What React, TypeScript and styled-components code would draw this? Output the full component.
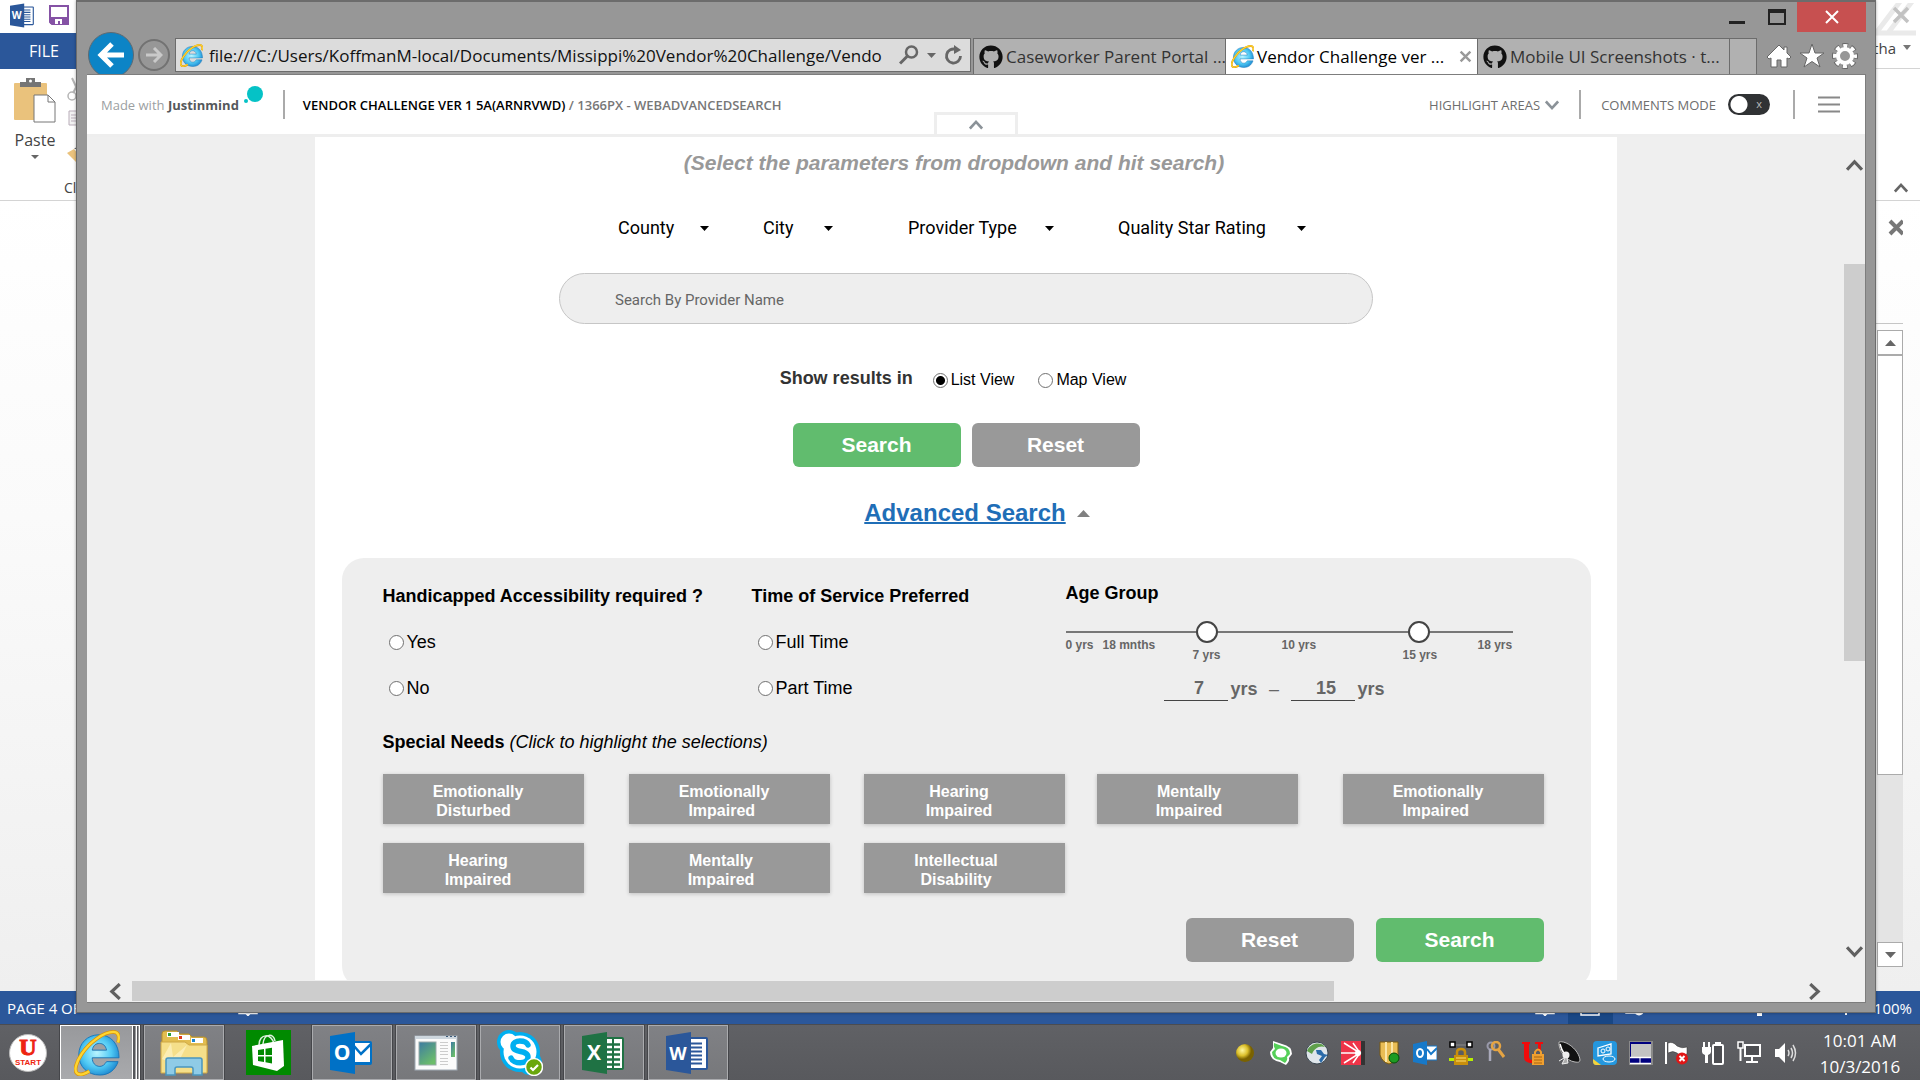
import React from "react";
import styled, { createGlobalStyle, css } from "styled-components";
import { FaGithub } from "react-icons/fa";

const ui = `"Open Sans", "Noto Sans", sans-serif`;
const arial = `"Liberation Sans", Arial, sans-serif`;
const roboto = `Roboto, "Liberation Sans", sans-serif`;

const GlobalStyle = createGlobalStyle`
  * { box-sizing: border-box; }
  body { margin: 0; overflow: hidden; font-family: ${ui}; }
  button, input, select { font: inherit; margin: 0; padding: 0; border: 0; background: none; color: inherit; }
  button { cursor: pointer; }
  fieldset { margin: 0; padding: 0; border: 0; min-width: 0; }
  legend { padding: 0; }
  h1, h2, h3, p { margin: 0; }
  svg { display: block; flex: none; }
`;

/* ---------- desktop and the word processor behind ---------- */

const Desktop = styled.div`
  position: relative;
  display: grid;
  grid-template-rows: 1fr 56px;
  height: 100vh;
  overflow: hidden;
`;
const Stage = styled.div`
  position: relative;
  min-height: 0;
`;
const WordWindow = styled.div`
  display: flex;
  flex-direction: column;
  height: 100%;
  background: #fff;
  color: #444;
`;
const WordTitle = styled.div`
  display: flex;
  justify-content: space-between;
  height: 33px;
  padding: 3px 0 0 10px;
`;
const WordQuick = styled.div`
  display: flex;
  align-items: flex-start;
  gap: 14px;
`;
const WordTabs = styled.div`
  display: flex;
  justify-content: space-between;
  height: 36px;
  border-bottom: 1px solid #d4d4d4;
`;
const FileTab = styled.button`
  width: 92px;
  padding-right: 4px;
  background: #2b579a;
  color: #fff;
  font-size: 16px;
  height: 36px;
`;
const UserName = styled.div`
  display: flex;
  align-items: center;
  gap: 7px;
  padding: 0 9px 6px 0;
  font-size: 15px;
`;
const Ribbon = styled.div`
  display: flex;
  justify-content: space-between;
  height: 132px;
  border-bottom: 1px solid #d4d4d4;
`;
const PasteGroup = styled.div`
  display: flex;
  gap: 8px;
  padding: 8px 0 0 14px;
`;
const PasteButton = styled.button`
  display: flex;
  flex-direction: column;
  align-items: center;
  width: 42px;
  font-size: 16px;
  line-height: 24px;
  height: 94px;
  gap: 3px;
`;
const ClipColumn = styled.div`
  display: flex;
  flex-direction: column;
  justify-content: space-between;
  padding-bottom: 2px;
  font-size: 14px;
  line-height: 20px;
`;
const RibbonEnd = styled.div`
  display: flex;
  align-items: flex-end;
  padding: 0 12px 5px 0;
`;
const WordBody = styled.div`
  flex: 1;
  min-height: 0;
  display: flex;
  flex-direction: column;
  align-items: flex-end;
  padding: 16px 17px 24px 0;
  background: linear-gradient(#ffffff, #fafafa 40%, #efefef);
`;
const PaneHead = styled.div`
  height: 107px;
  width: 100px;
  display: flex;
  justify-content: flex-end;
  border-bottom: 1px solid #c6c6c6;
`;
const WordScroll = styled.div`
  flex: 1;
  width: 26px;
  margin-top: 6px;
  display: flex;
  flex-direction: column;
  background: #e4e4e4;
`;
const ScrollBox = styled.button`
  width: 26px;
  height: 25px;
  display: grid;
  place-items: center;
  background: #fff;
  border: 1px solid #ababab;
`;
const WordThumb = styled.div`
  flex: 0 0 66%;
  background: #fff;
  border: 1px solid #ababab;
`;
const ScrollGap = styled.div`
  flex: 1;
`;
const StatusBar = styled.div`
  display: flex;
  justify-content: space-between;
  align-items: center;
  height: 33px;
  padding: 0 8px 0 7px;
  background: #2b579a;
  color: #fff;
  font-size: 15px;
  line-height: 18px;
`;
const StatusGroup = styled.div<{ $gap: number }>`
  display: flex;
  align-items: center;
  gap: ${(p) => p.$gap}px;
  height: 33px;
`;
const ViewModes = styled.div`
  display: flex;
  align-items: center;
  height: 33px;
`;
const ViewMode = styled.button<{ $on?: boolean }>`
  display: grid;
  place-items: center;
  width: 45px;
  height: 33px;
  background: ${(p) => (p.$on ? "#194785" : "transparent")};
`;

/* ---------- browser window ---------- */

const Browser = styled.div`
  position: absolute;
  inset: 0 44px 11px 76px;
  display: flex;
  flex-direction: column;
  padding: 0 9px 9px 10px;
  background: #979797;
  border: 1px solid #6c6c6c;
  border-top-width: 2px;
  box-shadow: 0 0 3px rgba(0, 0, 0, 0.35);
`;
const TitleBar = styled.div`
  display: flex;
  justify-content: flex-end;
  align-items: flex-start;
  height: 36px;
`;
const CaptionButton = styled.button<{ $close?: boolean }>`
  display: grid;
  place-items: center;
  width: ${(p) => (p.$close ? 69 : 40)}px;
  height: 30px;
  background: ${(p) => (p.$close ? "#c75050" : "transparent")};
`;
const Nav = styled.div`
  display: flex;
  align-items: flex-start;
  height: 36px;
  padding-left: 1px;
`;
const BackButton = styled.button`
  flex: none;
  display: grid;
  place-items: center;
  width: 46px;
  height: 46px;
  margin-top: -6px;
  border-radius: 50%;
  background: #0c84c6;
  border: 1px solid #5e6a72;
`;
const ForwardButton = styled.button`
  flex: none;
  display: grid;
  place-items: center;
  width: 32px;
  height: 32px;
  margin: 1px 5px 0 4px;
  border-radius: 50%;
  border: 2px solid #727272;
`;
const AddressBar = styled.div`
  flex: 1;
  min-width: 0;
  display: flex;
  align-items: center;
  height: 34px;
  padding: 0 6px 0 4px;
  margin-right: 2px;
  background: #dcdcdc;
  border: 1px solid #6c6c6c;
  color: #111;
`;
const Url = styled.input`
  flex: 1;
  min-width: 0;
  margin: 0 6px;
  font-size: 17px;
  outline: 0;
`;
const AddressTool = styled.button`
  display: grid;
  place-items: center;
  margin-left: 8px;
`;
const Tab = styled.button<{ $active?: boolean }>`
  flex: none;
  display: flex;
  align-items: center;
  gap: 3px;
  width: 252px;
  height: 37px;
  padding: 0 5px;
  background: ${(p) => (p.$active ? "#fff" : "#b1b1b1")};
  border: 1px solid #6c6c6c;
  border-right-width: 0;
  border-bottom-color: ${(p) => (p.$active ? "#fff" : "#808080")};
  color: ${(p) => (p.$active ? "#000" : "#333")};
  font-size: 17px;
  white-space: nowrap;
`;
const TabTitle = styled.span`
  flex: 1;
  text-align: left;
`;
const NewTab = styled.button`
  flex: none;
  width: 28px;
  height: 37px;
  background: #b1b1b1;
  border: 1px solid #6c6c6c;
`;
const Tools = styled.div`
  flex: none;
  display: flex;
  gap: 7px;
  padding: 5px 8px 0 9px;
`;
const PlainButton = styled.button`
  display: grid;
  place-items: center;
`;
const Viewport = styled.div`
  position: relative;
  flex: 1;
  min-height: 0;
  display: flex;
  flex-direction: column;
  background: #efefef;
  border: 1px solid #7d7d7d;
  border-left: 0;
`;

/* ---------- prototype viewer toolbar ---------- */

const ViewerBar = styled.header`
  position: relative;
  flex: none;
  display: flex;
  align-items: center;
  justify-content: space-between;
  height: 62px;
  padding: 0 25px 0 14px;
  background: #fff;
  border-bottom: 3px solid #eee;
  font-size: 13px;
  color: #6e6e6e;
`;
const BarGroup = styled.div`
  display: flex;
  align-items: center;
`;
const Brand = styled.div`
  display: flex;
  align-items: center;
  gap: 2px;
  font-size: 13px;
  color: #9c9fa2;
  b { color: #55585b; }
`;
const Divider = styled.span<{ $gap: number }>`
  width: 2px;
  height: 29px;
  margin: 0 ${(p) => p.$gap}px;
  background: #aaa;
`;
const Crumb = styled.h1`
  font-size: 13px;
  font-weight: 600;
  color: #777;
  b { font-weight: 600; color: #000; }
`;
const Handle = styled.button`
  position: absolute;
  left: 50%;
  bottom: -3px;
  width: 84px;
  height: 25px;
  margin-left: -42px;
  display: grid;
  place-items: center;
  background: #fff;
  border: 3px solid #eee;
`;
const BarButton = styled.button`
  display: flex;
  align-items: center;
  gap: 5px;
`;
const ToggleLabel = styled.label`
  display: flex;
  align-items: center;
  gap: 12px;
`;
const Toggle = styled.input`
  appearance: none;
  width: 42px;
  height: 21px;
  border-radius: 11px;
  background: radial-gradient(circle at 11px 50%, #fff 8px, transparent 9px), #303234;
`;
const ToggleFrame = styled.span`
  position: relative;
  display: grid;
`;
const ToggleMark = styled.span`
  position: absolute;
  right: 8px;
  top: 3px;
  font-size: 11px;
  line-height: 14px;
  color: #bbb;
`;

/* ---------- page ---------- */

const PageRow = styled.div`
  flex: 1;
  min-height: 0;
  display: flex;
`;
const Canvas = styled.div`
  flex: 1;
  min-width: 0;
  display: flex;
  justify-content: center;
  overflow: hidden;
`;
const Page = styled.main`
  width: 100%;
  max-width: 1302px;
  display: flex;
  flex-direction: column;
  align-items: center;
  padding: 13px 26px 0 27px;
  background: #fff;
  font-family: ${arial};
  color: #000;
  > * { flex: none; }
`;
const Hint = styled.h2`
  padding-right: 24px;
  font-size: 21px;
  line-height: 26px;
  font-style: italic;
  color: #999;
`;
const Filters = styled.div`
  display: grid;
  grid-template-columns: 145px 145px 210px 188px;
  margin-top: 40px;
  padding-right: 8px;
  font-family: ${roboto};
  font-size: 18px;
`;
const SelectBox = styled.label<{ $width: number }>`
  position: relative;
  display: block;
  width: ${(p) => p.$width}px;
  height: 24px;
  select {
    appearance: none;
    display: block;
    width: 100%;
    height: 24px;
    line-height: 24px;
    outline: 0;
  }
  svg { position: absolute; right: 0; top: 10px; }
`;
const NameSearch = styled.input`
  width: 814px;
  max-width: 100%;
  height: 51px;
  margin-top: 33px;
  padding: 2px 55px 0;
  border: 1px solid #c6c6c6;
  border-radius: 26px;
  background: #eee;
  font-family: ${roboto};
  font-size: 15px;
  &::placeholder { color: #666; opacity: 1; }
`;
const ResultsRow = styled.fieldset`
  display: flex;
  margin-top: 42px;
  padding-right: 26px;
  line-height: 24px;
`;
const ResultsTitle = styled.span`
  margin-right: 20px;
  font-size: 18px;
  font-weight: bold;
  color: #333;
`;
const RadioPair = styled.div`
  display: flex;
  gap: 24px;
`;
const RadioLabel = styled.label<{ $small?: boolean }>`
  display: flex;
  align-items: center;
  gap: 3px;
  height: ${(p) => (p.$small ? 26 : 22)}px;
  padding-top: ${(p) => (p.$small ? 2 : 0)}px;
  font-size: ${(p) => (p.$small ? 16 : 18)}px;
`;
const Radio = styled.input`
  appearance: none;
  width: 15px;
  height: 15px;
  border: 1px solid #707070;
  border-radius: 50%;
  background: #fff;
  &:checked { background: radial-gradient(circle, #000 4px, #fff 5px); }
`;
const Buttons = styled.div`
  display: flex;
  gap: 11px;
  margin-top: 31px;
`;
const ActionButton = styled.button<{ $tone: "go" | "plain" }>`
  width: 168px;
  height: 44px;
  border-radius: 6px;
  background: ${(p) => (p.$tone === "go" ? "#61bc6e" : "#999")};
  color: #fff;
  font-size: 21px;
  font-weight: bold;
`;
const AdvancedRow = styled.div`
  display: flex;
  align-items: center;
  gap: 11px;
  margin-top: 32px;
  padding-left: 22px;
  line-height: 28px;
  a {
    font-size: 24px;
    font-weight: bold;
    color: #1f6eb7;
    text-decoration-thickness: 2px;
  }
`;
const Panel = styled.section`
  align-self: stretch;
  margin-top: 31px;
  padding: 24px 47px 26px 41px;
  border-radius: 22px;
  background: #eee;
  font-size: 18px;
`;
const Columns = styled.div`
  display: grid;
  grid-template-columns: 369px 314px 1fr;
`;
const RadioColumn = styled.fieldset`
  display: flex;
  flex-direction: column;
  padding-top: 3px;
`;
const Title = styled.h3`
  font-size: 18px;
  line-height: 22px;
  font-weight: bold;
`;
const RadioStack = styled.div`
  display: flex;
  flex-direction: column;
  gap: 24px;
  padding: 24px 0 0 6px;
`;
const AgeColumn = styled.div`
  max-width: 447px;
  color: #666;
  h3 { color: #000; }
`;
const Slider = styled.div`
  position: relative;
  height: 22px;
  margin-top: 17px;
  background: linear-gradient(#777, #777) 0 10px / 100% 2px no-repeat;
  input {
    position: absolute;
    inset: 0;
    width: 100%;
    height: 22px;
    appearance: none;
    pointer-events: none;
  }
  input::-webkit-slider-thumb {
    appearance: none;
    width: 22px;
    height: 22px;
    border-radius: 50%;
    border: 2px solid #444;
    background: #fff;
    pointer-events: auto;
  }
`;
const Scale = styled.div`
  display: grid;
  grid-template-columns: 37px 90px 89px 121px 75px auto;
  margin-top: -6px;
  height: 28px;
  font-size: 12px;
  line-height: 14px;
  font-weight: bold;
`;
const Tick = styled.span<{ $low?: boolean }>`
  padding-top: ${(p) => (p.$low ? 11 : 1)}px;
`;
const AgeFields = styled.div`
  display: flex;
  align-items: center;
  margin: 12px 0 0 98px;
  font-weight: bold;
  label { display: flex; align-items: center; gap: 3px; }
  input {
    width: 64px;
    height: 24px;
    padding-left: 7px;
    text-align: center;
    border-bottom: 1px solid #444;
  }
`;
const Dash = styled.span`
  width: 33px;
  text-align: center;
  font-weight: normal;
`;
const NeedsTitle = styled(Title)`
  margin-top: 30px;
  i { font-weight: normal; }
`;
const Needs = styled.div`
  display: grid;
  grid-template-columns: 246px 235px 233px 246px 201px;
  row-gap: 19px;
  margin-top: 21px;
`;
const NeedButton = styled.button<{ $inset: number }>`
  width: 201px;
  height: 50px;
  padding: 4px ${(p) => p.$inset}px 0 0;
  background: #999;
  box-shadow: 0 1px 4px rgba(0, 0, 0, 0.2);
  color: #fff;
  font-size: 16px;
  line-height: 19px;
  font-weight: bold;
  white-space: pre-line;
`;
const PanelButtons = styled.div`
  display: flex;
  justify-content: flex-end;
  gap: 22px;
  margin-top: 25px;
`;
const VScroll = styled.div`
  flex: none;
  width: 21px;
  display: flex;
  flex-direction: column;
  align-items: center;
  padding: 20px 0;
`;
const VThumb = styled.div`
  width: 100%;
  flex: 0 0 397px;
  margin: 90px 0 auto;
  background: #cdcdcd;
`;
const HScroll = styled.div`
  flex: none;
  display: flex;
  align-items: center;
  height: 22px;
  padding: 0 42px 0 20px;
`;
const HThumb = styled.div`
  flex: 0 0 1202px;
  height: 20px;
  margin: 0 auto 0 8px;
  background: #cdcdcd;
`;

/* ---------- taskbar ---------- */

const Taskbar = styled.footer`
  display: flex;
  justify-content: space-between;
  align-items: stretch;
  background: linear-gradient(#606165, #58595d);
  border-top: 1px solid #4b4c50;
  padding-right: 18px;
`;
const Tasks = styled.div`
  display: flex;
  gap: 4px;
`;
const StartButton = styled.button`
  width: 56px;
  display: grid;
  place-items: center;
`;
const TaskButton = styled.button<{ $kind?: "open" | "active" | "pinned" }>`
  display: grid;
  place-items: center;
  width: 80px;
  border: 1px solid transparent;
  ${(p) =>
    (p.$kind ?? "open") === "open" &&
    css`
      background: linear-gradient(#808185, #77787b);
      border-color: #aaabae;
      outline: 1px solid #45464a;
      outline-offset: 0;
    `}
  ${(p) =>
    p.$kind === "active" &&
    css`
      padding-right: 7px;
      background:
        linear-gradient(#fff, #fff) 71px 0 / 1px 100% no-repeat,
        linear-gradient(#55565a, #55565a) 72px 0 / 2px 100% no-repeat,
        linear-gradient(#fff, #fff) 75px 0 / 1px 100% no-repeat,
        linear-gradient(#55565a, #55565a) 76px 0 / 1px 100% no-repeat,
        linear-gradient(#98999c, #a9aaad);
      border-color: #fff;
      outline: 1px solid #45464a;
    `}
`;
const Tray = styled.div`
  display: flex;
  align-items: center;
  gap: 12px;
`;
const Clock = styled.time`
  width: 84px;
  margin-left: 9px;
  padding-top: 2px;
  text-align: center;
  color: #fff;
  font-size: 17px;
  line-height: 26px;
  white-space: nowrap;
`;

/* ---------- drawings ---------- */

const Caret = ({ w = 9, h = 5, color = "#000", up = false }: { w?: number; h?: number; color?: string; up?: boolean }) => (
  <svg width={w} height={h} viewBox="0 0 10 6" preserveAspectRatio="none">
    <path d={up ? "M0 6L5 0L10 6Z" : "M0 0L10 0L5 6Z"} fill={color} />
  </svg>
);

const Chevron = ({ dir, size = 16, width = 3, color = "#606060" }: { dir: "up" | "down" | "left" | "right"; size?: number; width?: number; color?: string }) => {
  const d = { up: "M1 12L8 4.500L15 12", down: "M1 4L8 11.500L15 4", left: "M12 1L4.500 8L12 15", right: "M4 1L11.500 8L4 15" }[dir];
  return (
    <svg width={size} height={size} viewBox="0 0 16 16">
      <path d={d} fill="none" stroke={color} strokeWidth={width} />
    </svg>
  );
};

const Cross = ({ size, width, color }: { size: number; width: number; color: string }) => (
  <svg width={size} height={size} viewBox="0 0 16 16">
    <path d="M2 2L14 14M14 2L2 14" stroke={color} strokeWidth={width} />
  </svg>
);

const IELogo = ({ size }: { size: number }) => {
  const id = React.useId();
  return (
    <svg width={size} height={size} viewBox="0 0 48 48">
      <defs>
        <radialGradient id={id} cx="45%" cy="45%" r="60%">
          <stop offset="0" stopColor="#b8f4ff" />
          <stop offset="0.6" stopColor="#4fc9f4" />
          <stop offset="1" stopColor="#1c86cf" />
        </radialGradient>
      </defs>
      <path
        fillRule="evenodd"
        d="M26 5C38 5 47 14 47 29H19C19 34 22 38 27 38C30 38 32 36 34 33H46C43 42 36 47 27 47C14 47 5 38 5 26C5 14 14 5 26 5ZM19 21H34C33 16 30 14 26.500 14C23 14 20 16 19 21Z"
        fill={`url(#${id})`}
        stroke="#1a76b8"
        strokeWidth="1"
      />
      <path d="M46 13C48 6 46 2 41 2C31 2 16 13 8 25C2 34 0 42 3 45C6 48 11 46 16 43" fill="none" stroke="#d9950c" strokeWidth="4" />
      <path d="M46 13C48 6 46 2 41 2C31 2 16 13 8 25C2 34 0 42 3 45C6 48 11 46 16 43" fill="none" stroke="#ffd530" strokeWidth="2.500" />
    </svg>
  );
};

const OfficeIcon = ({ letter, color, size = 44 }: { letter: string; color: string; size?: number }) => (
  <svg width={size} height={size} viewBox="0 0 44 44">
    {letter === "O" ? (
      <>
        <rect x="22" y="10" width="20" height="24" rx="2" fill={color} />
        <path d="M24 12H40V31H24Z" fill="#fff" />
        <path d="M24 15L31 23L41 13" fill="none" stroke={color} strokeWidth="2.500" />
      </>
    ) : (
      <rect x="22" y="6" width="20" height="33" rx="2" fill={color} />
    )}
    {letter === "X" && (
      <>
        <path d="M24 8H40V37H24Z" fill="#fff" />
        <path d="M24 13.500H38M24 18.500H38M24 23.500H38M24 28.500H38M24 33.500H38" stroke={color} strokeWidth="2.500" />
        <path d="M31 8V37" stroke={color} strokeWidth="2" />
      </>
    )}
    {letter === "W" && (
      <>
        <path d="M24 8H40V37H24Z" fill="#fff" />
        <path d="M24 12.500H36M24 16.500H36M24 20.500H36M24 24.500H36M24 28.500H36M24 32.500H36" stroke={color} strokeWidth="1.800" />
      </>
    )}
    <path d="M0 5L25 1V43L0 39Z" fill={color} />
    <text x="12" y="29" textAnchor="middle" fontFamily="Open Sans" fontWeight="bold" fontSize={letter === "W" ? 18 : 21} fill="#fff">
      {letter}
    </text>
  </svg>
);

const SmallOutlook = () => (
  <svg width="24" height="24" viewBox="0 0 24 24">
    <path d="M13 5H24V19H13Z" fill="#fff" stroke="#1779c9" />
    <path d="M14 8L18 13L24 7" fill="none" stroke="#1779c9" strokeWidth="2" />
    <path d="M0 3L14 0V24L0 21Z" fill="#1779c9" />
    <ellipse cx="7" cy="12" rx="3" ry="4" fill="none" stroke="#fff" strokeWidth="2" />
  </svg>
);

const FolderIcon = () => (
  <svg width="50" height="48" viewBox="0 0 50 48">
    <path d="M3 5Q3 2 6 2H18L21 5H30L33 8H45Q48 8 48 12V43H3Z" fill="#e2bd50" stroke="#b8912e" />
    <path d="M8 3H20V8H8ZM19 6H31V11H19ZM32 9H44V14H32Z" fill="#fff" />
    <path d="M9 4H12V7H9Z" fill="#2a9d3a" /><path d="M20 7H23V10H20Z" fill="#e03a1c" /><path d="M33 10H36V13H33Z" fill="#1c86cf" />
    <path d="M2 13H26L30 16H48V44H2Z" fill="#f5df8a" stroke="#cfa844" />
    <path d="M3 30L12 14L14 28L28 16L18 36Z" fill="#fff6cf" opacity="0.600" />
    <path d="M7 46V31Q7 29 9 29H41Q43 29 43 31V46H34V40Q34 38 32 38H18Q16 38 16 40V46Z" fill="#8fcbe6" stroke="#4a96bf" strokeWidth="1.500" />
  </svg>
);

const StoreIcon = () => (
  <svg width="45" height="45" viewBox="0 0 45 45">
    <rect width="45" height="45" fill="#008a00" />
    <path d="M13 15C13 3 26 3 28 14M17 14C18 3 28 3 29 11" fill="none" stroke="#dff0df" strokeWidth="1.500" />
    <path d="M6 16L37 10L38 36L31 41L7 35Z" fill="#fff" />
    <path d="M12 20L18 19V25H12ZM19.500 18.800L26 17.800V25H19.500ZM12 26.500H18V32L12 31ZM19.500 26.500H26V33.500L19.500 32.300Z" fill="#008a00" />
  </svg>
);

const AppWindowIcon = () => (
  <svg width="44" height="36" viewBox="0 0 44 36">
    <defs>
      <linearGradient id="appPane" x1="0" y1="0" x2="0.600" y2="1">
        <stop offset="0" stopColor="#3d7ba3" /><stop offset="1" stopColor="#6cbd6a" />
      </linearGradient>
    </defs>
    <rect x="1" y="1" width="42" height="34" fill="#fbfbfb" stroke="#9fa9b3" />
    <rect x="1" y="1" width="42" height="3" fill="#cdd6de" />
    <path d="M32 1.500H34M36 1.500H38M40 1.500H42" stroke="#3b5a7a" />
    <rect x="5" y="7" width="17" height="23" fill="url(#appPane)" stroke="#9aa" />
    <path d="M26 7.500H34M26 10.500H34M26 13.500H34M26 16.500H34M26 19.500H34M26 23.500H34M26 26.500H34M26 29.500H34" stroke="#ccc" />
    <rect x="37" y="7" width="4" height="15" fill="url(#appPane)" />
  </svg>
);

const SkypeIcon = () => (
  <svg width="46" height="46" viewBox="0 0 46 46">
    <g fill="#00aff0"><circle cx="23" cy="22" r="20" /><circle cx="12" cy="12" r="12" /><circle cx="33" cy="33" r="12" /></g>
    <g fill="#fff"><circle cx="23" cy="22" r="16.500" /><circle cx="12" cy="12" r="8.500" /></g>
    <path d="M31 15C29 10 16 9 16 16C16 24 31 19 31 27C31 35 16 34 14 28" fill="none" stroke="#00aff0" strokeWidth="5.500" strokeLinecap="round" />
    <circle cx="37" cy="37" r="8.500" fill="#6aa70d" stroke="#fff" strokeWidth="1.500" />
    <path d="M33.500 37.500L36 40L41 35" fill="none" stroke="#fff" strokeWidth="2.200" />
  </svg>
);

const StartLogo = () => (
  <svg width="40" height="40" viewBox="0 0 40 40">
    <circle cx="20" cy="20" r="18.500" fill="#fff" stroke="#bbb" />
    <text x="20" y="22" textAnchor="middle" fontFamily="Liberation Serif" fontWeight="bold" fontSize="24" fill="#ee2410" stroke="#ee2410">U</text>
    <text x="20" y="32" textAnchor="middle" fontFamily="Liberation Sans" fontWeight="bold" fontSize="8" fill="#ee2410">START</text>
  </svg>
);

const BookIcon = () => (
  <svg width="20" height="17" viewBox="0 0 20 17">
    <path d="M1 1H8L10 3L12 1H19V14.500H12L10 16.500L8 14.500H1ZM10 3V16" fill="none" stroke="#fff" strokeWidth="1.500" />
  </svg>
);

const TrayIcon = ({ children, label }: { children: React.ReactNode; label: string }) => (
  <PlainButton aria-label={label}>
    <svg width="24" height="24" viewBox="0 0 24 24">{children}</svg>
  </PlainButton>
);

const TrayIcons = () => (
  <>
    <TrayIcon label="Status">
      <defs><radialGradient id="gold" cx="35%" cy="35%"><stop offset="0" stopColor="#fff8a0" /><stop offset="0.600" stopColor="#dcc02c" /><stop offset="1" stopColor="#7a6200" /></radialGradient></defs>
      <circle cx="12" cy="12" r="9" fill="url(#gold)" />
    </TrayIcon>
    <TrayIcon label="Sync">
      <path d="M4 0L13 3Q23 5 23 13L20 17Q21 20 17 24L11 21Q1 19 1 11L4 7Z" fill="#fff" />
      <path d="M5 2L13 5Q21 6 21 13L18 16Q19 19 16 22L11 19Q3 18 3 11L6 8Q4 5 5 2Z" fill="#55cf58" />
      <ellipse cx="12" cy="12" rx="5.500" ry="4.500" fill="#fff" />
    </TrayIcon>
    <TrayIcon label="VPN client">
      <circle cx="12" cy="12" r="11" fill="#dfe5ea" stroke="#38444e" />
      <path d="M2 10C5 2 16 0 20 6C14 4 9 8 7 13Z" fill="#5fa04b" />
      <path d="M11 9L16 9L19 13L23 14L20 16L16 22L14 19L17 15L12 13Z" fill="#2a6aa8" />
    </TrayIcon>
    <TrayIcon label="Capture">
      <rect width="21" height="24" fill="#ee3448" /><rect x="20" width="4" height="24" fill="#333" />
      <path d="M0 12H19M3 2L19 12L3 22M12 2L19 12L12 22" stroke="#fff" strokeWidth="1.500" fill="none" />
      <circle cx="17" cy="12" r="3" fill="#fff" />
    </TrayIcon>
    <TrayIcon label="Security">
      <path d="M3 1H21V14Q19 21 12 23Q5 21 3 14Z" fill="#e9bd55" stroke="#7a5a10" /><path d="M9 1V21M15 1V21" stroke="#fbe6a8" strokeWidth="2" />
      <circle cx="17" cy="17" r="5" fill="#1d9b22" stroke="#064d08" />
    </TrayIcon>
    <PlainButton aria-label="Outlook"><SmallOutlook /></PlainButton>
    <TrayIcon label="Network lock">
      <path d="M0 17H24V20H0Z" fill="#b8f000" /><path d="M5 4H19" stroke="#888" />
      <rect x="1" y="1" width="5" height="5" fill="#fff" stroke="#000" strokeWidth="1.500" /><rect x="18" y="1" width="5" height="5" fill="#fff" stroke="#000" strokeWidth="1.500" />
      <path d="M8 15V11Q8 8 12 8Q16 8 16 11V15" fill="none" stroke="#c98f0c" strokeWidth="2.500" />
      <rect x="5" y="14" width="14" height="10" fill="#c98f0c" /><path d="M7 17H17M7 20H17" stroke="#ffe070" />
    </TrayIcon>
    <TrayIcon label="Keys">
      <circle cx="6" cy="5" r="3.500" fill="none" stroke="#99a" strokeWidth="2" /><path d="M5 8V20" stroke="#aab" strokeWidth="2.500" />
      <circle cx="11" cy="5" r="4" fill="none" stroke="#e5a443" strokeWidth="2.500" /><path d="M13 8L19 16M15 13L17 11" stroke="#e5a443" strokeWidth="3" />
    </TrayIcon>
    <TrayIcon label="Unlock">
      <path d="M1 1H9V3H8V16Q9 20 14 19V22Q3 23 3 16V3H1ZM14 1H22V3H20V10H17V3H14Z" fill="#f10b0b" />
      <path d="M14 14V11Q17 6 20 11V14" fill="none" stroke="#f0a030" strokeWidth="2" /><rect x="11" y="13" width="12" height="11" fill="#f0a030" /><path d="M13 16H21M13 19H21M13 22H21" stroke="#a86410" />
    </TrayIcon>
    <TrayIcon label="Wireless">
      <path d="M2 1C9 -1 22 9 23 19Q23 22 18 21C9 20 1 9 2 1Z" fill="#111" stroke="#bbb" /><path d="M3 3C4 8 6 11 8 14" stroke="#fff" strokeWidth="1.500" fill="none" />
      <circle cx="9" cy="14" r="3.500" fill="#eee" /><path d="M7 17L2 20M8 17L5 23L11 22L10 17" fill="#aaa" stroke="#eee" />
    </TrayIcon>
    <TrayIcon label="Graphics">
      <rect width="24" height="24" rx="4" fill="#2497de" /><path d="M0 18L8 24H3Q0 24 0 20Z" fill="#f4d23a" />
      <path d="M5 7L18 3V13L5 15Z" fill="none" stroke="#fff" strokeWidth="1.300" /><circle cx="10" cy="10" r="2" fill="none" stroke="#fff" /><circle cx="15" cy="8" r="2" fill="none" stroke="#fff" />
      <ellipse cx="16" cy="18" rx="6" ry="3" fill="none" stroke="#fff" />
    </TrayIcon>
    <TrayIcon label="Touchpad">
      <rect width="24" height="24" fill="#8a8a8a" /><rect x="1" y="1" width="21" height="22" fill="#00007f" /><rect x="2" y="3" width="20" height="13" fill="#c3c3c3" />
      <path d="M1 16.500H22M1 22.500H22" stroke="#fff" strokeWidth="1.500" /><path d="M11 17V22" stroke="#fff" />
    </TrayIcon>
    <TrayIcon label="Action center">
      <path d="M1 23V1" stroke="#fff" strokeWidth="2" /><path d="M3 2Q8 0 12 5Q17 8 22 6V13Q16 16 12 12Q8 9 3 12Z" fill="#fff" stroke="#333" strokeWidth="0.500" />
      <circle cx="17" cy="17.500" r="6" fill="#e01616" /><path d="M14.500 15L19.500 20M19.500 15L14.500 20" stroke="#fff" strokeWidth="2" />
    </TrayIcon>
    <TrayIcon label="Battery">
      <rect x="12" y="4" width="10" height="19" rx="1" fill="#4d4e52" stroke="#fff" strokeWidth="2" /><rect x="14" y="1" width="6" height="3" fill="#fff" />
      <path d="M3 1V6M8 1V6" stroke="#fff" strokeWidth="2" /><path d="M1 6H10V11Q10 13 7 14V22H4V14Q1 13 1 11Z" fill="#fff" />
    </TrayIcon>
    <TrayIcon label="Network">
      <rect x="8" y="4" width="15" height="11" fill="#4d4e52" stroke="#fff" strokeWidth="2" /><path d="M15 15V20M9 21H21" stroke="#fff" strokeWidth="2" />
      <rect x="1" y="1" width="5" height="6" fill="#4d4e52" stroke="#fff" strokeWidth="1.500" /><path d="M3.500 7V20" stroke="#fff" strokeWidth="2" />
    </TrayIcon>
    <TrayIcon label="Volume">
      <path d="M2 8H6L12 2V22L6 16H2Z" fill="#fff" /><path d="M15 9Q17 12 15 15M18 7Q21 12 18 17M20 4Q25 12 20 20" fill="none" stroke="#ddd" strokeWidth="1.500" />
    </TrayIcon>
  </>
);

/* ---------- data ---------- */

const filters = [
  { label: "County", width: 91 },
  { label: "City", width: 70 },
  { label: "Provider Type", width: 146 },
  { label: "Quality Star Rating", width: 188 },
];

const needs = [
  { text: "Emotionally\nDisturbed\u00a0\u00a0", inset: 10 },
  { text: "Emotionally\nImpaired\u00a0", inset: 10 },
  { text: "Hearing\nImpaired", inset: 10 },
  { text: "Mentally\nImpaired", inset: 16 },
  { text: "Emotionally\nImpaired\u00a0", inset: 10 },
  { text: "Hearing\nImpaired", inset: 10 },
  { text: "Mentally\nImpaired", inset: 16 },
  { text: "Intellectual\nDisability", inset: 16 },
];

const ticks = [
  { text: "0 yrs" },
  { text: "18 mnths" },
  { text: "7 yrs", low: true },
  { text: "10 yrs" },
  { text: "15 yrs", low: true },
  { text: "18 yrs" },
];

/* ---------- sections ---------- */

const Word = () => (
  <WordWindow>
    <WordTitle>
      <WordQuick>
        <OfficeIcon letter="W" color="#2b579a" size={25} />
        <svg width="20" height="22" viewBox="0 0 20 22">
          <path d="M1 3H19V21H3L1 19Z" fill="#fff" stroke="#8552a5" strokeWidth="2" />
          <path d="M1 14H19V21H1Z" fill="#8552a5" /><path d="M6 16H13V21H11V18H9V21H6Z" fill="#fff" />
        </svg>
      </WordQuick>
      <svg width="44" height="36" viewBox="0 0 44 36">
        <path d="M0 30H40M0 30L26 -4M12 30L38 -4" stroke="#eaeaea" strokeWidth="5" />
        <path d="M18 5L32 19M32 5L18 19" stroke="#c2c2c2" strokeWidth="3.500" />
      </svg>
    </WordTitle>
    <WordTabs>
      <FileTab>FILE</FileTab>
      <UserName>tha <Caret w={8} h={5} color="#777" /></UserName>
    </WordTabs>
    <Ribbon>
      <PasteGroup>
        <PasteButton>
          <svg width="42" height="48" viewBox="0 0 42 48">
            <rect x="0" y="6" width="33" height="37" rx="1" fill="#eac27c" />
            <path d="M6 5H12V1H21V5H27V10H6Z" fill="#757575" /><circle cx="16.500" cy="4" r="1.500" fill="#fff" />
            <path d="M20 18H34L41 25V45H20Z" fill="#fff" stroke="#777" /><path d="M34 18V25H41" fill="none" stroke="#777" />
          </svg>
          Paste
          <Caret w={8} h={4} color="#666" />
        </PasteButton>
        <ClipColumn>
          <svg width="26" height="88" viewBox="0 0 26 88">
            <path d="M8 1L16 18M17 1L9 16" stroke="#b5b5b5" strokeWidth="2" /><circle cx="8" cy="19" r="4" fill="none" stroke="#b5b5b5" strokeWidth="1.500" />
            <path d="M5 34H14L18 38V48H5Z" fill="#f2f2f2" stroke="#b9adb9" /><path d="M7 38H12M7 41H16M7 44H16" stroke="#b9adb9" />
            <path d="M3 76L10 72L18 82L15 88Z" fill="#eac27c" /><path d="M10 72L18 66L22 72" fill="#666" />
          </svg>
          Clipboard
        </ClipColumn>
      </PasteGroup>
      <RibbonEnd><Chevron dir="up" size={14} width={3} color="#666" /></RibbonEnd>
    </Ribbon>
    <WordBody>
      <PaneHead>
        <svg width="18" height="20" viewBox="0 0 18 20"><path d="M5 4L18 17M18 4L5 17" stroke="#777" strokeWidth="4" /></svg>
      </PaneHead>
      <WordScroll>
        <ScrollBox aria-label="Scroll document up"><Caret w={11} h={6} color="#666" up /></ScrollBox>
        <WordThumb />
        <ScrollGap />
        <ScrollBox aria-label="Scroll document down"><Caret w={11} h={6} color="#666" /></ScrollBox>
      </WordScroll>
    </WordBody>
    <StatusBar>
      <StatusGroup $gap={157}>
        <span>PAGE 4 OF</span>
        <BookIcon />
      </StatusGroup>
      <StatusGroup $gap={96}>
        <ViewModes>
          <ViewMode aria-label="Read mode"><BookIcon /></ViewMode>
          <ViewMode $on aria-label="Print layout">
            <svg width="20" height="17" viewBox="0 0 20 17"><path d="M1 1H19V16H1Z" fill="none" stroke="#fff" strokeWidth="1.500" /></svg>
          </ViewMode>
          <ViewMode aria-label="Web layout">
            <svg width="20" height="17" viewBox="0 0 20 17"><path d="M10 14H1V1H17V6" fill="none" stroke="#fff" strokeWidth="1.500" /><circle cx="14" cy="11.500" r="5" fill="#fff" /></svg>
          </ViewMode>
        </ViewModes>
        <StatusGroup $gap={22}>
          <svg width="98" height="17" viewBox="0 0 98 17"><path d="M0 8.500H86" stroke="#fff" /><path d="M3 1H8V17H3Z" fill="#fff" /><path d="M86 8.500H98M92 2.500V16" stroke="#fff" strokeWidth="2" /></svg>
          <span>100%</span>
        </StatusGroup>
      </StatusGroup>
    </StatusBar>
  </WordWindow>
);

const BrowserChrome = () => (
  <>
    <TitleBar>
      <CaptionButton aria-label="Minimize"><svg width="16" height="16"><path d="M0 12H16V15H0Z" fill="#222" /></svg></CaptionButton>
      <CaptionButton aria-label="Maximize"><svg width="18" height="16"><path d="M1 1H17V15H1Z" fill="none" stroke="#222" strokeWidth="2" /><path d="M0 1H18V4H0Z" fill="#222" /></svg></CaptionButton>
      <CaptionButton $close aria-label="Close"><Cross size={16} width={2} color="#fff" /></CaptionButton>
    </TitleBar>
    <Nav>
      <BackButton aria-label="Back">
        <svg width="28" height="26" viewBox="0 0 28 26"><path d="M15 2L4 13L15 24M4 13H27" fill="none" stroke="#fff" strokeWidth="5" /></svg>
      </BackButton>
      <ForwardButton aria-label="Forward">
        <svg width="18" height="16" viewBox="0 0 18 16"><path d="M9 1L16 8L9 15M16 8H1" fill="none" stroke="#c9c9c9" strokeWidth="3" /></svg>
      </ForwardButton>
      <AddressBar>
        <IELogo size={23} />
        <Url aria-label="Address" readOnly value="file:///C:/Users/KoffmanM-local/Documents/Missippi%20Vendor%20Challenge/Vendo" />
        <AddressTool aria-label="Search web"><svg width="20" height="20" viewBox="0 0 20 20"><circle cx="12.500" cy="7" r="5.500" fill="none" stroke="#666" strokeWidth="2.500" /><path d="M8.500 11L1 18.500" stroke="#666" strokeWidth="3" /></svg></AddressTool>
        <AddressTool aria-label="Address list"><Caret w={9} h={5} color="#666" /></AddressTool>
        <AddressTool aria-label="Refresh"><svg width="20" height="20" viewBox="0 0 20 20"><path d="M12 4.500A7 7 0 1 0 16.500 11" fill="none" stroke="#666" strokeWidth="2.800" /><path d="M10 0L17 5L10 9Z" fill="#666" /></svg></AddressTool>
      </AddressBar>
      <Tab><FaGithub size={24} color="#111" /><TabTitle>Caseworker Parent Portal ...</TabTitle></Tab>
      <Tab $active><IELogo size={23} /><TabTitle>Vendor Challenge ver ...</TabTitle><Cross size={13} width={3} color="#999" /></Tab>
      <Tab><FaGithub size={24} color="#111" /><TabTitle>Mobile UI Screenshots · t...</TabTitle></Tab>
      <NewTab aria-label="New tab" />
      <Tools>
        <PlainButton aria-label="Home"><svg width="26" height="26" viewBox="0 0 26 26"><path d="M13 2L1 14L3 16L5 15V24H11V17H15V24H21V15L23 16L25 14L21 10V4H18V7Z" fill="#fff" stroke="#666" /></svg></PlainButton>
        <PlainButton aria-label="Favorites"><svg width="26" height="26" viewBox="0 0 26 26"><path d="M13 1L16 10H25L18 15L21 24L13 18.500L5 24L8 15L1 10H10Z" fill="#fff" stroke="#666" /></svg></PlainButton>
        <PlainButton aria-label="Settings">
          <svg width="26" height="26" viewBox="0 0 26 26">
            <circle cx="13" cy="13" r="10" fill="none" stroke="#666" strokeWidth="6" strokeDasharray="5 2.854" strokeDashoffset="2.500" />
            <circle cx="13" cy="13" r="10" fill="none" stroke="#fff" strokeWidth="4" strokeDasharray="4 3.854" strokeDashoffset="2" />
            <circle cx="13" cy="13" r="7" fill="none" stroke="#fff" strokeWidth="4" />
          </svg>
        </PlainButton>
      </Tools>
    </Nav>
  </>
);

const Viewer = () => (
  <ViewerBar>
    <BarGroup>
      <Brand>
        <span>Made with <b>Justinmind</b></span>
        <svg width="24" height="40" viewBox="0 0 24 40"><circle cx="14" cy="9" r="8" fill="#05c2c6" /><circle cx="5" cy="16" r="2" fill="#05c2c6" /></svg>
      </Brand>
      <Divider $gap={18} />
      <Crumb><b>VENDOR CHALLENGE VER 1 5A(ARNRVWD)</b> / 1366PX - WEBADVANCEDSEARCH</Crumb>
    </BarGroup>
    <Handle aria-label="Collapse toolbar"><Chevron dir="up" size={14} width={3} color="#8b9298" /></Handle>
    <BarGroup>
      <BarButton>HIGHLIGHT AREAS <Chevron dir="down" size={14} width={3} color="#8b9298" /></BarButton>
      <Divider $gap={20} />
      <ToggleLabel>
        COMMENTS MODE
        <ToggleFrame><Toggle type="checkbox" role="switch" /><ToggleMark>x</ToggleMark></ToggleFrame>
      </ToggleLabel>
      <Divider $gap={23} />
      <PlainButton aria-label="Menu"><svg width="22" height="17"><path d="M0 1.500H22M0 8.500H22M0 15.500H22" stroke="#888" strokeWidth="2" /></svg></PlainButton>
    </BarGroup>
  </ViewerBar>
);

const SearchPage = () => (
  <Page>
    <Hint>(Select the parameters from dropdown and hit search)</Hint>
    <Filters>
      {filters.map((f) => (
        <SelectBox key={f.label} $width={f.width}>
          <select aria-label={f.label}><option>{f.label}</option></select>
          <Caret />
        </SelectBox>
      ))}
    </Filters>
    <NameSearch type="text" aria-label="Search By Provider Name" placeholder="Search By Provider Name" />
    <ResultsRow>
      <ResultsTitle>Show results in</ResultsTitle>
      <RadioPair>
        <RadioLabel $small><Radio type="radio" name="view" defaultChecked />List View</RadioLabel>
        <RadioLabel $small><Radio type="radio" name="view" />Map View</RadioLabel>
      </RadioPair>
    </ResultsRow>
    <Buttons>
      <ActionButton $tone="go">Search</ActionButton>
      <ActionButton $tone="plain">Reset</ActionButton>
    </Buttons>
    <AdvancedRow><a href="#advanced">Advanced Search</a><Caret w={13} h={7} color="#808080" up /></AdvancedRow>
    <Panel id="advanced">
      <Columns>
        <RadioColumn aria-label="Handicapped accessibility">
          <Title>Handicapped Accessibility required ?</Title>
          <RadioStack>
            <RadioLabel><Radio type="radio" name="access" />Yes</RadioLabel>
            <RadioLabel><Radio type="radio" name="access" />No</RadioLabel>
          </RadioStack>
        </RadioColumn>
        <RadioColumn aria-label="Time of service">
          <Title>Time of Service Preferred</Title>
          <RadioStack>
            <RadioLabel><Radio type="radio" name="time" />Full Time</RadioLabel>
            <RadioLabel><Radio type="radio" name="time" />Part Time</RadioLabel>
          </RadioStack>
        </RadioColumn>
        <AgeColumn>
          <Title>Age Group</Title>
          <Slider>
            <input type="range" aria-label="Youngest age" aria-valuetext="7 yrs" min={0} max={1000} defaultValue={306} />
            <input type="range" aria-label="Oldest age" aria-valuetext="15 yrs" min={0} max={1000} defaultValue={805} />
          </Slider>
          <Scale>{ticks.map((t) => <Tick key={t.text} $low={t.low}>{t.text}</Tick>)}</Scale>
          <AgeFields>
            <label><input defaultValue="7" />yrs</label>
            <Dash>–</Dash>
            <label><input defaultValue="15" />yrs</label>
          </AgeFields>
        </AgeColumn>
      </Columns>
      <NeedsTitle>Special Needs <i>(Click to highlight the selections)</i></NeedsTitle>
      <Needs>
        {needs.map((n, i) => <NeedButton key={i} $inset={n.inset}>{n.text}</NeedButton>)}
      </Needs>
      <PanelButtons>
        <ActionButton $tone="plain">Reset</ActionButton>
        <ActionButton $tone="go">Search</ActionButton>
      </PanelButtons>
    </Panel>
  </Page>
);

export default function App() {
  return (
    <Desktop>
      <GlobalStyle />
      <Stage>
        <Word />
        <Browser>
          <BrowserChrome />
          <Viewport>
            <Viewer />
            <PageRow>
              <Canvas><SearchPage /></Canvas>
              <VScroll><Chevron dir="up" size={17} /><VThumb /><Chevron dir="down" size={17} /></VScroll>
            </PageRow>
            <HScroll><Chevron dir="left" size={17} /><HThumb /><Chevron dir="right" size={17} /></HScroll>
          </Viewport>
        </Browser>
      </Stage>
      <Taskbar>
        <Tasks>
          <StartButton aria-label="Start"><StartLogo /></StartButton>
          <TaskButton $kind="active" aria-label="Internet Explorer"><IELogo size={46} /></TaskButton>
          <TaskButton aria-label="File Explorer"><FolderIcon /></TaskButton>
          <TaskButton $kind="pinned" aria-label="Store"><StoreIcon /></TaskButton>
          <TaskButton aria-label="Outlook"><OfficeIcon letter="O" color="#0071c6" /></TaskButton>
          <TaskButton aria-label="Application"><AppWindowIcon /></TaskButton>
          <TaskButton aria-label="Skype"><SkypeIcon /></TaskButton>
          <TaskButton aria-label="Excel"><OfficeIcon letter="X" color="#1f7244" /></TaskButton>
          <TaskButton aria-label="Word"><OfficeIcon letter="W" color="#2b579a" /></TaskButton>
        </Tasks>
        <Tray>
          <TrayIcons />
          <Clock>10:01 AM<br />10/3/2016</Clock>
        </Tray>
      </Taskbar>
    </Desktop>
  );
}
